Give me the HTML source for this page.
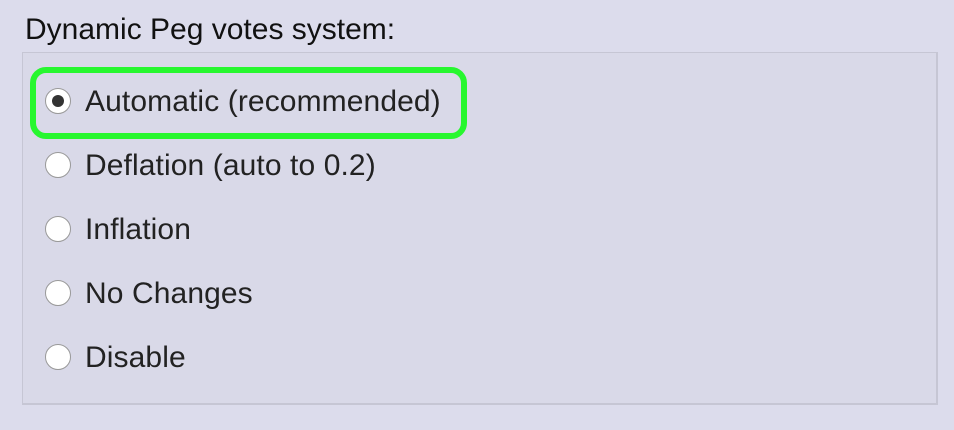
<!DOCTYPE html>
<html><head><style>
html,body{margin:0;padding:0;}
body{width:954px;height:430px;background:#dcdcec;font-family:"Liberation Sans",sans-serif;position:relative;overflow:hidden;}
.t{position:absolute;left:25px;top:13px;font-size:30px;color:#111;}
.box{position:absolute;left:22px;top:52px;width:913px;height:350px;border:1px solid #c6c6d4;border-right-width:2px;border-bottom-width:2px;background:#d9d9e8;}
.g{position:absolute;left:30px;top:67px;width:425px;height:60px;border:6px solid #27f72f;border-radius:16px;}
.r{position:absolute;left:45px;width:26px;height:26px;border:1px solid #999;border-radius:50%;background:#fff;box-sizing:border-box;}
.r.on::after{content:"";position:absolute;left:6px;top:6px;width:12px;height:12px;border-radius:50%;background:#333;}
.l{position:absolute;left:85px;font-size:30px;color:#222;letter-spacing:0.1px;}
</style></head><body>
<div class="t">Dynamic Peg votes system:</div>
<div class="box"></div>
<div class="g"></div>
<div class="r on" style="top:88px"></div><div class="l" style="top:85px">Automatic (recommended)</div>
<div class="r" style="top:152px"></div><div class="l" style="top:149px">Deflation (auto to 0.2)</div>
<div class="r" style="top:216px"></div><div class="l" style="top:213px">Inflation</div>
<div class="r" style="top:280px"></div><div class="l" style="top:277px">No Changes</div>
<div class="r" style="top:344px"></div><div class="l" style="top:341px">Disable</div>
</body></html>
